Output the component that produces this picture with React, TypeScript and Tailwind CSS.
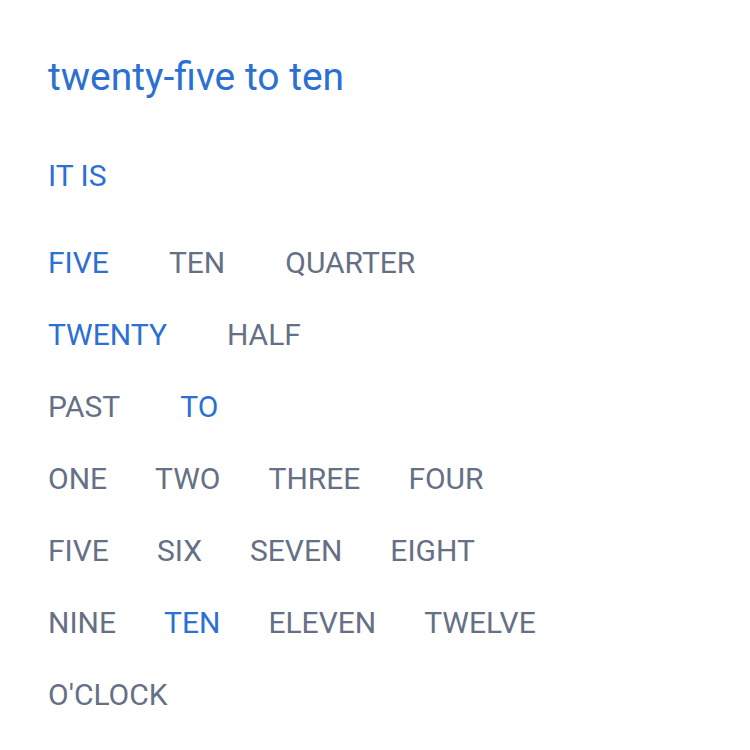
import React from 'react';

type Word = { label: string; on?: boolean };

const MINUTES: Word[][] = [
  [{ label: 'FIVE', on: true }, { label: 'TEN' }, { label: 'QUARTER' }],
  [{ label: 'TWENTY', on: true }, { label: 'HALF' }],
  [{ label: 'PAST' }, { label: 'TO', on: true }],
];

const HOURS: Word[][] = [
  [{ label: 'ONE' }, { label: 'TWO' }, { label: 'THREE' }, { label: 'FOUR' }],
  [{ label: 'FIVE' }, { label: 'SIX' }, { label: 'SEVEN' }, { label: 'EIGHT' }],
  [{ label: 'NINE' }, { label: 'TEN', on: true }, { label: 'ELEVEN' }, { label: 'TWELVE' }],
  [{ label: "O'CLOCK" }],
];

const WordRow = ({ words, gap }: { words: Word[]; gap: string }) => (
  <div className={`flex h-[72px] items-center ${gap}`}>
    {words.map((w, i) => (
      <span key={i} className={w.on ? 'text-[#2b70d2]' : 'text-[#667085]'}>
        {w.label}
      </span>
    ))}
  </div>
);

const App: React.FC = () => {
  return (
    <div className="min-h-screen w-[750px] bg-white px-12 pt-[54px] font-['Roboto',sans-serif]">
      <h1 className="text-[39px] leading-[46px] text-[#2b70d2]">twenty-five to ten</h1>
      <div className="mt-[51px] text-[30px] leading-none">
        <div className="flex h-[50px] items-center text-[#2b70d2]">IT IS</div>
        <div className="mt-[26px]">
          {MINUTES.map((row, i) => (
            <WordRow key={i} words={row} gap="gap-[60px]" />
          ))}
          {HOURS.map((row, i) => (
            <WordRow key={i} words={row} gap="gap-[48px]" />
          ))}
        </div>
      </div>
    </div>
  );
};

export default App;
